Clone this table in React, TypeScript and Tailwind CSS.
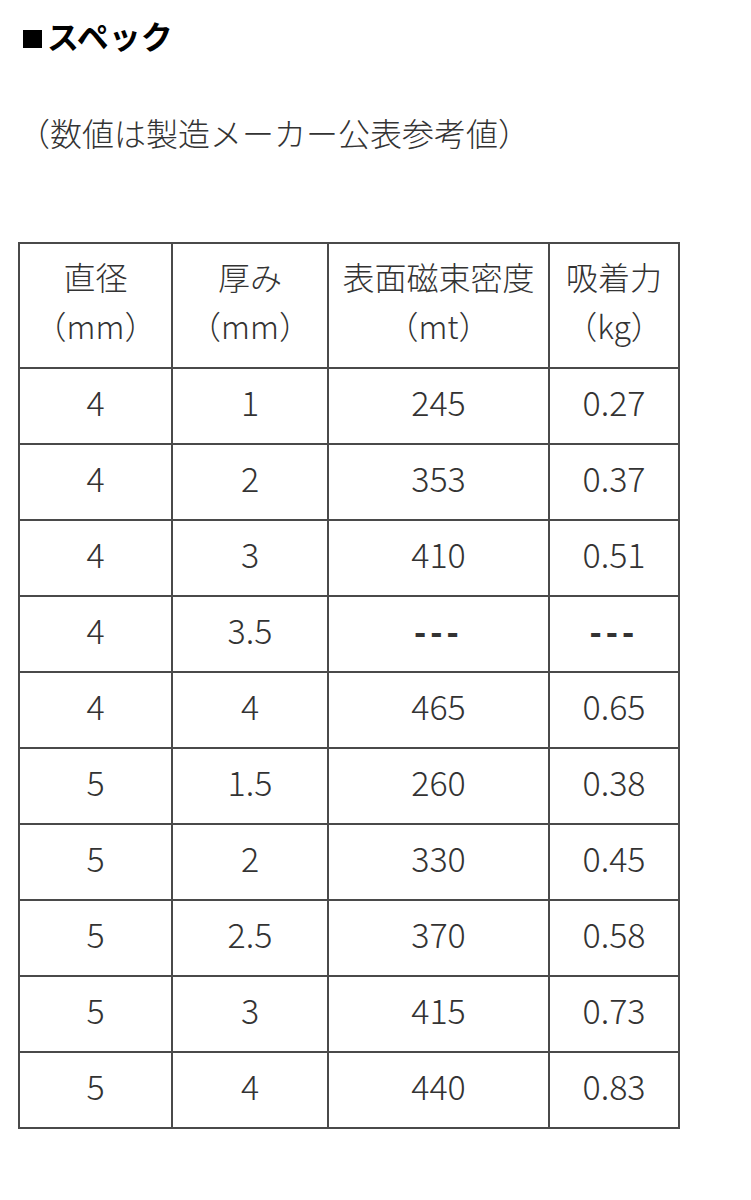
const rows: [string, string, string, string][] = [
  ['4', '1', '245', '0.27'],
  ['4', '2', '353', '0.37'],
  ['4', '3', '410', '0.51'],
  ['4', '3.5', '---', '---'],
  ['4', '4', '465', '0.65'],
  ['5', '1.5', '260', '0.38'],
  ['5', '2', '330', '0.45'],
  ['5', '2.5', '370', '0.58'],
  ['5', '3', '415', '0.73'],
  ['5', '4', '440', '0.83'],
];

const headers: [string, string][] = [
  ['直径', '（mm）'],
  ['厚み', '（mm）'],
  ['表面磁束密度', '（mt）'],
  ['吸着力', '（kg）'],
];

const App = () => {
  return (
    <div
      className="min-h-[1200px] bg-white px-[18px] pt-[15px] text-[#333]"
      style={{ fontFamily: '"Noto Sans CJK JP", "Noto Sans", sans-serif' }}
    >
      <h2 className="flex items-center text-[32px] font-bold leading-[40px] text-black">
        <span className="mr-[5px] ml-[5px] mt-[8px] inline-block h-[18px] w-[19px] bg-black" />
        スペック
      </h2>
      <p className="mt-[57px] text-[32px] font-light leading-[40px]">（数値は製造メーカー公表参考値）</p>

      <table className="mt-[90px] w-[660px] table-fixed border-collapse border-2 border-[#4a4a4a]">
        <colgroup>
          <col className="w-[153px]" />
          <col className="w-[156px]" />
          <col className="w-[221px]" />
          <col className="w-[130px]" />
        </colgroup>
        <thead>
          <tr className="h-[125px]">
            {headers.map(([a, b]) => (
              <th
                key={a}
                className="border-2 border-[#4a4a4a] p-0 pb-[10px] text-center text-[32px] font-light leading-[49px]"
              >
                <div>{a}</div>
                <div>{b}</div>
              </th>
            ))}
          </tr>
        </thead>
        <tbody>
          {rows.map((r, i) => (
            <tr key={i} className="h-[76px]">
              {r.map((c, j) => (
                <td
                  key={j}
                  className={`border-2 border-[#4a4a4a] p-0 pb-[8px] text-center leading-[40px] ${
                    c === '---' ? 'text-[32px] font-black tracking-[4px]' : 'text-[34px] font-light'
                  }`}
                >
                  {c}
                </td>
              ))}
            </tr>
          ))}
        </tbody>
      </table>
    </div>
  );
};

export default App;
